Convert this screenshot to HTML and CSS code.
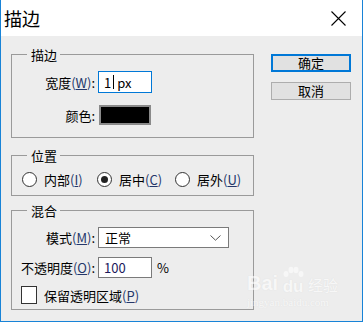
FILE: index.html
```html
<!DOCTYPE html>
<html lang="zh-CN">
<head>
    <meta charset="UTF-8">
    <title>描边</title>
    <link rel="stylesheet" href="styles.css">
</head>
<body>
    <div class="dialog">
        <div class="titlebar">
            <span class="title">描边</span>
            <svg class="close" width="15" height="15" viewBox="0 0 15 15">
                <path d="M0.5 0.5 L14.5 14.5 M14.5 0.5 L0.5 14.5" stroke="#000" stroke-width="1.1" fill="none"/>
            </svg>
        </div>
        <div class="content">
            <div class="groups">
                <fieldset class="group group-stroke">
                    <legend>描边</legend>
                    <div class="row row-width">
                        <label class="lbl">宽度<span class="key">(<u>W</u>)</span>:</label>
                        <div class="field field-focus">
                            <span>1</span><span class="caret"></span><span class="unit">px</span>
                        </div>
                    </div>
                    <div class="row row-color">
                        <label class="lbl">颜色:</label>
                        <div class="swatch"></div>
                    </div>
                </fieldset>

                <fieldset class="group group-pos">
                    <legend>位置</legend>
                    <div class="radios">
                        <label class="radio"><span class="dot"></span><span>内部<span class="key">(<u>I</u>)</span></span></label>
                        <label class="radio checked"><span class="dot"></span><span>居中<span class="key">(<u>C</u>)</span></span></label>
                        <label class="radio"><span class="dot"></span><span>居外<span class="key">(<u>U</u>)</span></span></label>
                    </div>
                </fieldset>

                <fieldset class="group group-blend">
                    <legend>混合</legend>
                    <div class="row row-select">
                        <label class="lbl">模式<span class="key">(<u>M</u>)</span>:</label>
                        <div class="select">
                            <span>正常</span>
                            <svg width="11" height="6" viewBox="0 0 11 6">
                                <path d="M0.5 0.5 L5.5 5.2 L10.5 0.5" stroke="#555" stroke-width="1" fill="none"/>
                            </svg>
                        </div>
                    </div>
                    <div class="row row-select">
                        <label class="lbl">不透明度<span class="key">(<u>O</u>)</span>:</label>
                        <div class="field field-opacity"><span class="num">100</span></div>
                        <span class="pct">%</span>
                    </div>
                    <div class="row row-check">
                        <span class="checkbox"></span>
                        <label>保留透明区域<span class="key">(<u>P</u>)</span></label>
                    </div>
                </fieldset>
            </div>

            <div class="buttons">
                <button class="btn btn-default">确定</button>
                <button class="btn">取消</button>
            </div>
        </div>

        <div class="watermark">
            <span class="wm-bai">Bai</span>
            <span class="wm-du">
                <svg width="24" height="12" viewBox="0 0 24 12">
                    <ellipse cx="5" cy="8" rx="2.5" ry="3" fill="#fff"/>
                    <ellipse cx="10" cy="4" rx="2.5" ry="3.2" fill="#fff"/>
                    <ellipse cx="15" cy="4" rx="2.5" ry="3.2" fill="#fff"/>
                    <ellipse cx="20" cy="8" rx="2.5" ry="3" fill="#fff"/>
                </svg>
                <span class="wm-du-text">du</span>
            </span>
            <span class="wm-jy">经验</span>
            <div class="wm-url">jingyan.baidu.com</div>
        </div>
    </div>
</body>
</html>
```

FILE: styles.css
```css
* {
    box-sizing: border-box;
}
body {
    margin: 0;
    background: #fff;
    font-family: "Noto Sans CJK SC", "Noto Sans", sans-serif;
    font-size: 13px;
    color: #000;
}
.dialog {
    width: 363px;
    height: 322px;
    border: 1px solid #1883d7;
    border-top: none;
    background: #ededed;
    display: flex;
    flex-direction: column;
    position: relative;
    overflow: hidden;
}
.titlebar {
    height: 36px;
    flex: none;
    background: #fff;
    display: flex;
    align-items: center;
    justify-content: space-between;
    padding: 0 16px 0 3px;
}
.title {
    font-size: 18px;
    line-height: 24px;
}
.content {
    display: flex;
    gap: 17px;
    padding: 10px 0 0 10px;
}
.groups {
    width: 243px;
    display: flex;
    flex-direction: column;
}
.group {
    margin: 0;
    padding: 0;
    min-width: 0;
    border: 1px solid #9a9a9a;
}
.group legend {
    margin-left: 15px;
    padding: 0 3px 0 4px;
    height: 17px;
    line-height: 17px;
}
.group-stroke {
    padding: 8px 0 12px;
}
.group-pos {
    margin-top: 9px;
    padding: 6px 0 7px;
}
.group-blend {
    margin-top: 6px;
    padding: 8px 0 5px;
}
.row {
    display: flex;
    align-items: center;
    gap: 3px;
}
.row-width {
    height: 22px;
}
.row-color {
    height: 20px;
    margin-top: 12px;
}
.row-select {
    height: 21px;
}
.row-select + .row-select {
    margin-top: 9px;
}
.lbl {
    width: 83px;
    text-align: right;
    white-space: nowrap;
}
.key {
    color: #24376a;
}
.field {
    width: 54px;
    height: 100%;
    background: #fff;
    border: 1px solid #7a7a7a;
    display: flex;
    align-items: center;
    padding-left: 5px;
}
.field-focus {
    border-color: #0078d7;
}
.caret {
    width: 1px;
    height: 14px;
    background: #000;
    margin: 0 3px 0 2px;
}
.field-opacity .num {
    color: #1c1a5c;
}
.pct {
    margin-left: 2px;
}
.swatch {
    width: 52px;
    height: 20px;
    margin-left: 1px;
    background: #000;
    border: 2px solid #8a8a8a;
}
.radios {
    display: flex;
    align-items: center;
    height: 18px;
    padding-left: 10px;
}
.radio {
    display: flex;
    align-items: center;
    gap: 7px;
    width: 75px;
    white-space: nowrap;
}
.radio + .radio {
    width: 78px;
}
.dot {
    width: 15px;
    height: 15px;
    border: 1px solid #333;
    border-radius: 50%;
    background: #fff;
    display: flex;
    align-items: center;
    justify-content: center;
}
.checked .dot::after {
    content: "";
    width: 7px;
    height: 7px;
    border-radius: 50%;
    background: #222;
}
.select {
    width: 131px;
    height: 100%;
    background: #fff;
    border: 1px solid #7a7a7a;
    display: flex;
    align-items: center;
    justify-content: space-between;
    padding: 0 7px 0 6px;
}
.row-check {
    height: 18px;
    margin-top: 8px;
    padding-left: 9px;
    gap: 7px;
}
.checkbox {
    width: 16px;
    height: 18px;
    background: #fff;
    border: 1px solid #333;
}
.buttons {
    margin-top: 8px;
    display: flex;
    flex-direction: column;
    gap: 10px;
}
.btn {
    width: 80px;
    height: 18px;
    padding: 0;
    font: inherit;
    line-height: 14px;
    color: #000;
    background: #e1e1e1;
    border: 1px solid #adadad;
}
.btn-default {
    border: 2px solid #0078d7;
}
.watermark {
    position: absolute;
    left: 246px;
    top: 266px;
    color: #fff;
    opacity: 0.6;
    text-shadow: 0 0 1px #d0d0d0;
    white-space: nowrap;
}
.wm-bai {
    font-family: "Liberation Sans", sans-serif;
    font-weight: bold;
    font-size: 20px;
    vertical-align: bottom;
}
.wm-du {
    display: inline-flex;
    flex-direction: column;
    align-items: center;
    vertical-align: bottom;
}
.wm-du-text {
    font-family: "Liberation Sans", sans-serif;
    font-weight: bold;
    font-size: 17px;
    line-height: 17px;
}
.wm-jy {
    font-size: 15px;
    vertical-align: bottom;
}
.wm-url {
    font-family: "Liberation Serif", serif;
    font-size: 11px;
    line-height: 12px;
    margin-top: 1px;
}
```
